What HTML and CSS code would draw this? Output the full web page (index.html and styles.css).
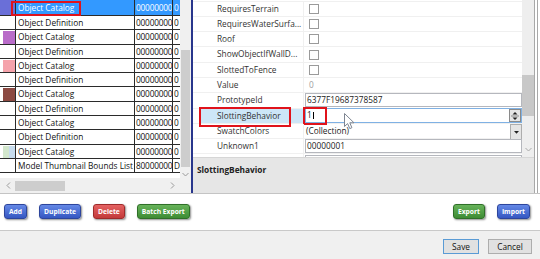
FILE: index.html
```html
<!DOCTYPE html>
<html>
<head>
<meta charset="utf-8">
<link rel="stylesheet" href="styles.css">
</head>
<body>
<div class="content">
  <div class="panels">
    <div class="left">
      <div class="list-wrap">
        <div class="list">
          <div class="row first sel">
            <div class="cell sw"><span class="swatch" style="background:#6a6fd8"></span></div>
            <div class="cell name">Object Catalog<span class="mark mark-list"></span></div>
            <div class="cell id">00000000</div>
            <div class="cell ext">0</div>
          </div>
          <div class="row"><div class="cell sw"></div><div class="cell name">Object Definition</div><div class="cell id">00000000</div><div class="cell ext">0</div></div>
          <div class="row"><div class="cell sw"><span class="swatch" style="background:#b96cc9"></span></div><div class="cell name">Object Catalog</div><div class="cell id">00000000</div><div class="cell ext">0</div></div>
          <div class="row"><div class="cell sw"></div><div class="cell name">Object Definition</div><div class="cell id">00000000</div><div class="cell ext">0</div></div>
          <div class="row"><div class="cell sw"><span class="swatch" style="background:#f5a3ab"></span></div><div class="cell name">Object Catalog</div><div class="cell id">00000000</div><div class="cell ext">0</div></div>
          <div class="row"><div class="cell sw"></div><div class="cell name">Object Definition</div><div class="cell id">00000000</div><div class="cell ext">0</div></div>
          <div class="row"><div class="cell sw"><span class="swatch" style="background:#8c4a42"></span></div><div class="cell name">Object Catalog</div><div class="cell id">00000000</div><div class="cell ext">0</div></div>
          <div class="row"><div class="cell sw"></div><div class="cell name">Object Definition</div><div class="cell id">00000000</div><div class="cell ext">0</div></div>
          <div class="row"><div class="cell sw"></div><div class="cell name">Object Catalog</div><div class="cell id">00000000</div><div class="cell ext">0</div></div>
          <div class="row"><div class="cell sw"></div><div class="cell name">Object Definition</div><div class="cell id">00000000</div><div class="cell ext">0</div></div>
          <div class="row"><div class="cell sw"><span class="swatch split"></span></div><div class="cell name">Object Catalog</div><div class="cell id">00000000</div><div class="cell ext">0</div></div>
          <div class="row"><div class="cell sw"></div><div class="cell name">Model Thumbnail Bounds List</div><div class="cell id">80000000</div><div class="cell ext">D</div></div>
        </div>
        <div class="vscroll">
          <div class="vtrack-top"></div>
          <div class="vthumb"></div>
          <svg class="chev" width="7" height="5" viewBox="0 0 7 5"><path d="M0.5 1 L3.5 4 L6.5 1" fill="none" stroke="#9a9a9a" stroke-width="1"/></svg>
        </div>
      </div>
      <div class="hscroll-row">
        <div class="hscroll">
          <svg class="hchev" width="5" height="7" viewBox="0 0 5 7"><path d="M4 0.5 L1 3.5 L4 6.5" fill="none" stroke="#9a9a9a" stroke-width="1"/></svg>
          <div class="hthumb"></div>
          <div class="hspace"></div>
          <svg class="hchev" width="5" height="7" viewBox="0 0 5 7"><path d="M1 0.5 L4 3.5 L1 6.5" fill="none" stroke="#9a9a9a" stroke-width="1"/></svg>
        </div>
        <div class="corner"></div>
      </div>
    </div>
    <div class="splitter"></div>
    <div class="right">
      <div class="grid-wrap">
        <div class="props">
          <div class="prow partial"></div>
          <div class="prow"><div class="pname">RequiresTerrain</div><div class="pval"><span class="cb"></span></div></div>
          <div class="prow"><div class="pname">RequiresWaterSurfa...</div><div class="pval"><span class="cb"></span></div></div>
          <div class="prow"><div class="pname">Roof</div><div class="pval"><span class="cb"></span></div></div>
          <div class="prow"><div class="pname">ShowObjectIfWallD...</div><div class="pval"><span class="cb"></span></div></div>
          <div class="prow"><div class="pname">SlottedToFence</div><div class="pval"><span class="cb"></span></div></div>
          <div class="prow"><div class="pname">Value</div><div class="pval ro">0</div></div>
          <div class="prow"><div class="pname">PrototypeId</div><div class="pval edit"><div class="tb">6377F19687378587</div></div></div>
          <div class="prow"><div class="pname selname">SlottingBehavior<span class="mark mark-name"></span></div><div class="pval edit"><div class="tb focus"><span class="txt">1<span class="caret"></span></span><span class="mark mark-val"></span><span class="spin"><svg width="10" height="12" viewBox="0 0 10 12"><path d="M2.5 4.5 L5 2 L7.5 4.5 Z" fill="#222"/><path d="M1 6 H9" stroke="#888" stroke-width="1"/><path d="M2.5 7.5 L5 10 L7.5 7.5 Z" fill="#222"/></svg></span></div></div></div>
          <div class="prow"><div class="pname">SwatchColors</div><div class="pval edit"><div class="combo"><span class="txt">(Collection)</span><span class="drop"><svg width="7" height="5" viewBox="0 0 7 5"><path d="M1 1 L3.5 3.8 L6 1 Z" fill="#222"/></svg></span></div></div></div>
          <div class="prow"><div class="pname">Unknown1</div><div class="pval edit"><div class="tb">00000001</div></div></div>
          <div class="prow"><div class="pname"></div><div class="pval edit"><div class="tb"></div></div></div>
        </div>
        <div class="pscroll">
          <div class="ptrack-top"></div>
          <div class="pthumb"></div>
          <svg class="pchev" width="7" height="5" viewBox="0 0 7 5"><path d="M0.5 1 L3.5 4 L6.5 1" fill="none" stroke="#a8a8a8" stroke-width="1"/></svg>
        </div>
      </div>
      <div class="desc">SlottingBehavior</div>
    </div>
    <div class="edge"></div>
  </div>
  <div class="actions">
    <div class="btn-group">
      <button class="btn blue">Add</button>
      <button class="btn blue">Duplicate</button>
      <button class="btn red">Delete</button>
      <button class="btn green">Batch Export</button>
    </div>
    <div class="btn-group">
      <button class="btn green">Export</button>
      <button class="btn blue">Import</button>
    </div>
  </div>
</div>
<div class="footer">
  <button class="dlg default">Save</button>
  <button class="dlg">Cancel</button>
</div>
<svg class="cursor" width="12" height="18" viewBox="0 0 12 18"><path d="M0.5 0.5 L0.5 13.5 L3.6 10.6 L5.8 15.6 L7.9 14.7 L5.8 9.8 L10 9.8 Z" fill="#fff" stroke="#7d8591" stroke-width="1" stroke-linejoin="round"/></svg>
</body>
</html>
```
FILE: styles.css
```css
* { box-sizing: border-box; }

body {
  margin: 0;
  width: 540px;
  height: 259px;
  overflow: hidden;
  position: relative;
  background: #f0f0f0;
  font-family: "Open Sans", "Noto Sans", sans-serif;
  font-size: 8.3px;
  color: #111;
}

.content {
  background: #fff;
  height: 231px;
  border-bottom: 1px solid #c9c9c9;
}

.panels {
  display: flex;
  height: 194px;
  border-bottom: 1px solid #c4c4c4;
}

/* left list */
.left {
  width: 191px;
  display: flex;
  flex-direction: column;
}

.list-wrap {
  display: flex;
  height: 178px;
}

.list {
  width: 180px;
  overflow: hidden;
}

.row {
  display: flex;
  height: 14.3px;
  border-bottom: 1px solid #2b2b2b;
}

.row.first { height: 16px; }

.row.sel { background: #3399ff; color: #fff; }

.cell {
  border-right: 1px solid #2b2b2b;
  white-space: nowrap;
  overflow: hidden;
  line-height: 13.3px;
  position: relative;
}

.row.first .cell { line-height: 15px; }

.sw {
  width: 16px;
  display: flex;
  justify-content: flex-end;
  padding-top: 1px;
}

.row.first .sw { padding-top: 0; }

.swatch {
  display: block;
  width: 12px;
  height: 100%;
}

.row.first .swatch { width: 15px; }

.swatch.split {
  background: linear-gradient(to right, #d3e7cd 50%, #c7dcee 50%);
}

.name {
  width: 119px;
  padding-left: 2px;
  overflow: visible;
}

.id {
  width: 38px;
  padding-left: 1px;
  letter-spacing: -0.2px;
}

.ext {
  flex: 1;
  border-right: none;
  padding-left: 1px;
}

.mark {
  position: absolute;
  border: 2px solid #e0131b;
  pointer-events: none;
}

.mark-list {
  left: -5px;
  top: 1px;
  width: 70px;
  height: 15px;
}

.vscroll {
  width: 11px;
  background: #f0f0f0;
  display: flex;
  flex-direction: column;
  align-items: center;
}

.vtrack-top { height: 50px; }

.vthumb {
  width: 9px;
  height: 117px;
  background: #cdcdcd;
}

.chev { margin-top: 5px; }

.hscroll-row {
  display: flex;
  height: 15px;
}

.hscroll {
  width: 180px;
  background: #f0f0f0;
  display: flex;
  align-items: center;
  padding: 0 5px 0 6px;
}

.hthumb {
  width: 50px;
  height: 10px;
  margin-left: 4px;
  background: #cdcdcd;
}

.hspace { flex: 1; }

.corner {
  flex: 1;
  background: #f0f0f0;
}

.splitter {
  width: 2px;
  background: #28368c;
}

/* right property grid */
.right {
  flex: 1;
  display: flex;
  flex-direction: column;
}

.grid-wrap {
  display: flex;
  height: 157px;
}

.props {
  flex: 1;
  overflow: hidden;
  color: #333;
}

.prow {
  display: flex;
  height: 15.3px;
  border-bottom: 1px solid #f0f0f0;
}

.prow.partial { height: 1.5px; }

.pname {
  width: 111px;
  flex: none;
  padding-left: 24px;
  border-right: 1px solid #f0f0f0;
  line-height: 14px;
  white-space: nowrap;
  position: relative;
}

.pname.selname {
  background: linear-gradient(to right, #fff 6px, #cde6f7 6px);
}

.mark-name {
  left: 6px;
  top: -2px;
  width: 92px;
  height: 20px;
}

.pval {
  flex: 1;
  display: flex;
  align-items: center;
  padding-left: 5px;
  line-height: 14px;
}

.pval.ro { color: #a0a0a0; }

.pval.edit { padding-left: 1px; }

.cb {
  width: 10px;
  height: 10px;
  border: 1px solid #9a9a9a;
  background: #fff;
}

.tb {
  flex: 1;
  height: 14px;
  border: 1px solid #b5b7bd;
  padding-left: 1px;
  line-height: 12px;
  color: #222;
  display: flex;
  position: relative;
}

.tb.focus {
  border-color: #7fb1e4;
  height: 15px;
}

.txt { flex: 1; }

.caret {
  display: inline-block;
  width: 1px;
  height: 7px;
  margin-left: 1px;
  background: #000;
  vertical-align: -1px;
}

.mark-val {
  left: -3px;
  top: -2px;
  width: 24px;
  height: 18px;
}

.spin {
  width: 12px;
  height: 13px;
  border: 1px solid #8a8a8a;
  background: #e6e6e6;
  display: flex;
  align-items: center;
  justify-content: center;
}

.combo {
  flex: 1;
  display: flex;
  align-items: center;
  height: 15px;
  padding-left: 1px;
  color: #222;
}

.drop {
  width: 12px;
  height: 16px;
  margin-top: 2px;
  border: 1px solid #adadad;
  background: #e5e5e5;
  display: flex;
  align-items: center;
  justify-content: center;
}

.pscroll {
  width: 12px;
  background: #eeeeee;
  display: flex;
  flex-direction: column;
  align-items: center;
}

.ptrack-top { height: 75px; }

.pthumb {
  width: 12px;
  height: 41px;
  background: #c8c8c8;
}

.pchev { margin-top: 31px; }

.desc {
  flex: 1;
  background: #e6e6e6;
  border-top: 1px solid #d6d6d6;
  padding: 6px 4px;
  line-height: 11px;
  font-weight: bold;
  color: #222;
}

.edge {
  width: 4px;
  margin-right: 2px;
  border-left: 1px solid #a8a8a8;
  border-right: 1px solid #a8a8a8;
  background: #fff;
}

/* action buttons */
.actions {
  display: flex;
  justify-content: space-between;
  padding: 10px 10px 0 4px;
}

.btn-group {
  display: flex;
  gap: 12px;
}

.btn {
  height: 15px;
  padding: 0 4px;
  border-radius: 3px;
  font-family: "Open Sans", sans-serif;
  font-weight: bold;
  font-size: 6.7px;
  color: #fff;
  border: 1px solid;
  box-shadow: 1px 1px 2px rgba(0, 0, 0, 0.45);
  line-height: 12px;
}

.btn.blue {
  background: linear-gradient(#6488e6, #3557c2);
  border-color: #2d459c;
}

.btn.red {
  background: linear-gradient(#e56262, #c33a3a);
  border-color: #9e2b2b;
}

.btn.green {
  background: linear-gradient(#67b35a, #3e8c34);
  border-color: #2f6f28;
}

/* dialog footer */
.footer {
  display: flex;
  justify-content: flex-end;
  gap: 9px;
  padding: 8px 8px 0 0;
}

.dlg {
  height: 15px;
  width: 44px;
  padding: 0;
  background: #e1e1e1;
  border: 1px solid #adadad;
  font-family: "Open Sans", sans-serif;
  font-size: 8.3px;
  color: #111;
  line-height: 12px;
}

.dlg.default {
  width: 36px;
  border-color: #5a9bd5;
}

.cursor {
  position: absolute;
  left: 344px;
  top: 113px;
}
```
